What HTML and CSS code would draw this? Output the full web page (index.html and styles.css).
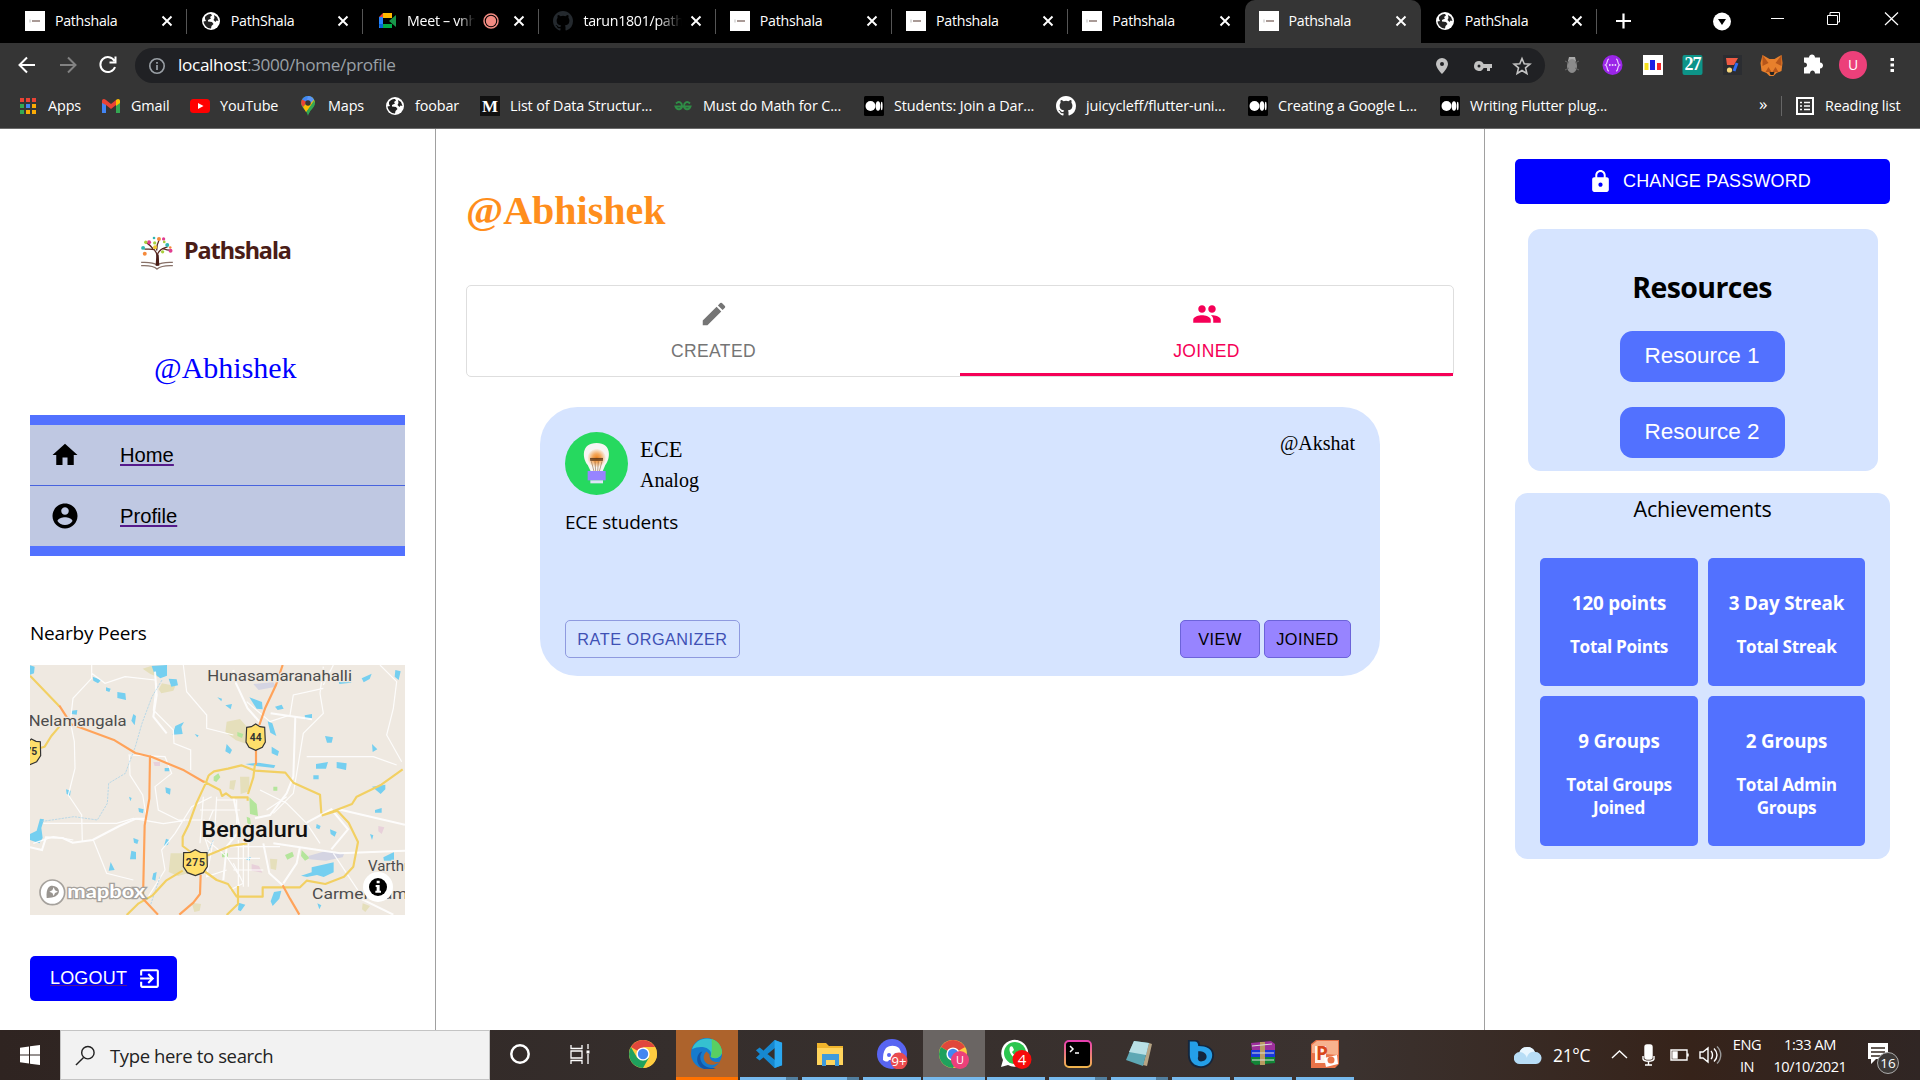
FILE: index.html
```html
<!DOCTYPE html>
<html lang="en">
<head>
<meta charset="utf-8">
<title>Pathshala</title>
<link rel="stylesheet" href="styles.css">
</head>
<body>
<svg class="defs" width="0" height="0" aria-hidden="true">
  <symbol id="globe" viewBox="0 0 20 20"><circle cx="10" cy="10" r="9" fill="#fff"/><path d="M4 6c1-2 4-3.500 6-3l1 1.500-2 1.500 1 1.500-3 1.500v1.500l4 .5 1.500 2-2 2-.5 2.500C6 17.500 3 14 2.500 10.500L5 10 4 8zM13 4l3 2 1.500 4-2-.5-1 1.500-2-2 1-2z" fill="#222"/></symbol>
  <symbol id="close" viewBox="0 0 12 12"><path d="M1.500 1.500l9 9M10.500 1.500l-9 9" stroke="#fff" stroke-width="1.900" fill="none"/></symbol>
  <symbol id="page" viewBox="0 0 20 20"><path fill="#fff" d="M0 0h20v20H0z"/><path d="M7 10h8" stroke="#a99a96" stroke-width="2"/><path d="M5 8.500v3" stroke="#bbb"/></symbol>
  <symbol id="github" viewBox="0 0 16 16"><path d="M8 0C3.580 0 0 3.580 0 8c0 3.540 2.290 6.530 5.470 7.590.4.070.55-.17.55-.38 0-.19-.01-.82-.01-1.490-2.010.37-2.530-.49-2.690-.94-.09-.23-.48-.94-.82-1.130-.28-.15-.68-.52-.01-.53.63-.01 1.080.58 1.230.82.720 1.210 1.870.87 2.330.66.070-.52.280-.87.510-1.070-1.780-.2-3.640-.89-3.640-3.950 0-.87.310-1.590.820-2.150-.08-.2-.36-1.020.080-2.120 0 0 .670-.21 2.200.820a7.600 7.600 0 0 1 4 0c1.530-1.040 2.200-.82 2.200-.82.440 1.100.160 1.920.080 2.120.510.560.820 1.270.820 2.150 0 3.070-1.870 3.750-3.650 3.950.290.250.540.730.540 1.480 0 1.070-.01 1.930-.01 2.200 0 .210.150.460.550.380A8.010 8.010 0 0 0 16 8c0-4.420-3.580-8-8-8z"/></symbol>
  <symbol id="medium" viewBox="0 0 20 20"><rect width="20" height="20" rx="1.500"/><circle cx="6.500" cy="10" r="5" fill="#fff"/><ellipse cx="14" cy="10" rx="2.300" ry="4.700" fill="#fff"/><ellipse cx="17.700" cy="10" rx=".9" ry="4.200" fill="#fff"/></symbol>
  <symbol id="chrome" viewBox="0 0 28 28"><circle cx="14" cy="14" r="14" fill="#ffcd40"/><path d="M14 14 1.900 7A14 14 0 0 1 26.100 7z" fill="#e0473c"/><path d="M14 7h12.100A14 14 0 0 1 14 28l6-10.500z" fill="#ffcd40"/><path d="M1.900 7A14 14 0 0 0 14 28l6-10.500-6 3-6-3z" fill="#1fa15d"/><circle cx="14" cy="14" r="6.600" fill="#fff"/><circle cx="14" cy="14" r="5.200" fill="#4386f0"/></symbol>
</svg>

<header class="browser">
  <div class="tabstrip">
    <div class="tab"><svg class="fav"><use href="#page"/></svg><span>Pathshala</span><svg class="x"><use href="#close"/></svg></div>
    <div class="tab"><svg class="fav"><use href="#globe"/></svg><span>PathShala</span><svg class="x"><use href="#close"/></svg></div>
    <div class="tab"><svg class="fav" viewBox="0 0 20 20"><path d="M2 6v11h4z" fill="#2684fc"/><path d="M2 6l4-4v4z" fill="#ea4335"/><path d="M2 6h4v8H2z" fill="#2684fc"/><path d="M6 2h9v5H6z" fill="#ffba00"/><path d="M2 13h4v4H3z" fill="#0066da"/><path d="M6 13h9v4H6z" fill="#00ac47"/><path d="M12 10l7-6v12z" fill="#19964a"/></svg><span class="fade">Meet – vnh</span><svg class="rec" viewBox="0 0 16 16"><circle cx="8" cy="8" r="7" fill="none" stroke="#f28b82" stroke-width="1.500"/><circle cx="8" cy="8" r="5.200" fill="#f28b82"/></svg><svg class="x"><use href="#close"/></svg></div>
    <div class="tab"><svg class="fav dim"><use href="#github"/></svg><span class="fade">tarun1801/path</span><svg class="x"><use href="#close"/></svg></div>
    <div class="tab"><svg class="fav"><use href="#page"/></svg><span>Pathshala</span><svg class="x"><use href="#close"/></svg></div>
    <div class="tab"><svg class="fav"><use href="#page"/></svg><span>Pathshala</span><svg class="x"><use href="#close"/></svg></div>
    <div class="tab no-sep"><svg class="fav"><use href="#page"/></svg><span>Pathshala</span><svg class="x"><use href="#close"/></svg></div>
    <div class="tab active"><svg class="fav"><use href="#page"/></svg><span>Pathshala</span><svg class="x"><use href="#close"/></svg></div>
    <div class="tab"><svg class="fav"><use href="#globe"/></svg><span>PathShala</span><svg class="x"><use href="#close"/></svg></div>
    <svg class="window-controls" viewBox="0 0 323 43"><path d="M19 21h15M26.500 13.500v15" stroke="#fff" stroke-width="2.200"/><circle cx="125" cy="21.500" r="9" fill="#fff"/><path d="M121 19h8l-4 6z" fill="#000"/><path d="M174 18.500h13" stroke="#fff"/><path d="M230.500 15.500h10v9h-10zM233 15v-2.500h9.500v9.500H241" fill="none" stroke="#fff"/><path d="M288 12.500l13 12.500M301 12.500L288 25" stroke="#fff" stroke-width="1.200"/></svg>
  </div>
  <div class="toolbar">
    <svg class="nav-icons" viewBox="0 0 135 42" fill="none" stroke="#fff" stroke-width="2"><path d="M35 22H20M27 14.500L19.500 22l7.500 7.500"/><path d="M60 22h15M68 14.500l7.500 7.500-7.500 7.500" stroke="#828282"/><path d="M114.500 18a7.500 7.500 0 1 0 .5 6M115.500 13.500v6h-6"/></svg>
    <div class="omnibox">
      <svg class="info" viewBox="0 0 18 18"><circle cx="9" cy="9" r="7.200" fill="none" stroke="#9aa0a6" stroke-width="1.600"/><path d="M9 8v5M9 5v1.700" stroke="#9aa0a6" stroke-width="1.700"/></svg>
      <span class="url">localhost<i>:3000/home/profile</i></span>
      <svg class="omni-icons" viewBox="0 0 120 34"><path d="M17 9a6 6 0 0 0-6 6c0 4 6 10 6 10s6-6 6-10a6 6 0 0 0-6-6zm0 4a2 2 0 1 1 0 4 2 2 0 0 1 0-4z" fill="#c2c2c2"/><path d="M53 12a5 5 0 1 0 4.600 7H61v3h3v-3h2v-4h-8.400A5 5 0 0 0 53 12zm0 3.500a1.500 1.500 0 1 1 0 3 1.500 1.500 0 0 1 0-3z" transform="translate(1 0)" fill="#c2c2c2" fill-rule="evenodd"/><path d="M97 9.500l2.200 5.300 5.700.4-4.400 3.700 1.400 5.600-4.900-3-4.900 3 1.400-5.600-4.400-3.700 5.700-.4z" fill="none" stroke="#c2c2c2" stroke-width="1.600"/></svg>
    </div>
    <svg class="ext" viewBox="0 0 375 43">
      <path d="M24 14h6l1 4h-8z" fill="#aaa"/><ellipse cx="27" cy="23" rx="5" ry="7" fill="#8b8b8b"/><path d="M20 18l4 2M34 18l-4 2M20 27l4-2M34 27l-4-2" stroke="#666"/>
      <circle cx="67.500" cy="22" r="10" fill="#9a25e8"/><path d="M64 16c-2.500 0-1 5-3.500 6 2.500 1 1 6 3.500 6M71 16c2.500 0 1 5 3.500 6-2.500 1-1 6-3.500 6" stroke="#e9c8ff" stroke-width="1.200" fill="none"/><path d="M64 22h7.500" stroke="#fff" stroke-width="1.600" stroke-dasharray="1.600 1.200"/>
      <path d="M98 12h20v20H98z" fill="#fff"/><path d="M101.500 20v7" stroke="#f9e21c" stroke-width="4"/><path d="M107.500 17v10" stroke="#1d22e6" stroke-width="5"/><path d="M114 20v7" stroke="#f2272c" stroke-width="4"/>
      <rect x="137.500" y="12" width="20" height="20" rx="2" fill="#0d9488"/><text x="147.500" y="27" text-anchor="middle" font-size="18" font-weight="700" font-family="Liberation Serif" letter-spacing="-1" fill="#fff">27</text>
      <path d="M178 12h19v20h-19z" fill="#2b2d31"/><path d="M181 15h12l-4 7h-7z" fill="#ef5b43"/><circle cx="184.500" cy="27" r="2.600" fill="#f6d77b"/><path d="M192 20l-3 8" stroke="#2f6cf2" stroke-width="3"/>
      <g transform="translate(9.500 0)"><path d="M208 12l7 4h5l7-4 1 8-1 8-5 2-3 3h-4l-3-3-5-2-1-8z" fill="#e8802c"/><path d="M208 12l6 8-6 3M227 12l-6 8 6 3M211 29l3-5 3 5M224 29l-3-5-3 5" fill="#b7561a"/><path d="M215 29h5l-1 3h-3z" fill="#222"/></g>
      <path d="M259 16h5c0-4 6-4 6 0h5v5c4 0 4 6 0 6v5h-5c0-4-5-4-5 0h-6v-6c4 0 4-5 0-5z" fill="#fff" transform="translate(0 -1.500)"/>
      <circle cx="308" cy="22" r="14" fill="#ec407a"/><text x="308" y="27" text-anchor="middle" font-size="14" font-family="Open Sans" fill="#fff">U</text>
      <path d="M345.500 15h3.500v3h-3.500zM345.500 20.500h3.500v3h-3.500zM345.500 26h3.500v3h-3.500z" fill="#fff"/>
    </svg>
  </div>
  <nav class="bookmarks">
    <a class="b1"><svg viewBox="0 0 20 20"><g fill="#ea4335"><path d="M2 2h4v4H2zM8 2h4v4H8zM14 2h4v4h-4z"/></g><g fill="#34a853"><path d="M2 8h4v4H2zM2 14h4v4H2z"/></g><path d="M8 8h4v4H8z" fill="#4285f4"/><path d="M14 8h4v4h-4zM8 14h4v4H8zM14 14h4v4h-4z" fill="#fbab05"/></svg>Apps</a>
    <a class="b2"><svg viewBox="0 0 20 20"><path d="M1 5v12h4V8z" fill="#4285f4"/><path d="M19 5v12h-4V8z" fill="#34a853"/><path d="M1 5c0-2 2-3 4-1l5 4 5-4v5l-5 4-5-4-4-2z" fill="#ea4335"/><path d="M15 4c2-2 4-1 4 1v2l-4 3z" fill="#fbbc04"/></svg>Gmail</a>
    <a class="b3"><svg viewBox="0 0 20 20"><rect y="3" width="20" height="14" rx="3.500" fill="#f00"/><path d="M8 7l5.500 3L8 13z" fill="#fff"/></svg>YouTube</a>
    <a class="b4"><svg viewBox="0 0 20 20"><path d="M10 0a7 7 0 0 0-7 7c0 5 6 7 7 13 1-6 7-8 7-13a7 7 0 0 0-7-7z" fill="#34a853"/><path d="M10 0a7 7 0 0 0-6 3.500L8 7l6-6z" fill="#4285f4"/><path d="M4 3.500C2 7 4 10 5 11l4-5z" fill="#ea4335"/><path d="M5 11l9-10 3 5-9 10z" fill="#fbbc04"/><path d="M10 0a7 7 0 0 1 6 3.500L12 8 9 4z" fill="#5a95f5"/><path d="M16.300 4C18 9 14 12 12 15l-1.500 3.500L9 15z" fill="#34a853"/><circle cx="10" cy="7" r="2.700" fill="#353535"/></svg>Maps</a>
    <a class="b5"><svg><use href="#globe"/></svg>foobar</a>
    <a class="b6"><svg viewBox="0 0 20 20"><path d="M0 0h20v20H0z" fill="#111"/><text x="10" y="15.500" text-anchor="middle" font-family="Liberation Serif" font-weight="700" font-size="17" fill="#fff">M</text></svg>List of Data Structur...</a>
    <a class="b7"><svg viewBox="0 0 20 20" fill="none" stroke="#2f8d46" stroke-width="1.900"><path d="M3 7.500c3-3 6-1 6 2.500s-5 5-6.500 0.500h15c-1.500 4.500-6.500 3-6.500-.5s3-5.500 6-2.500"/></svg>Must do Math for C...</a>
    <a class="b8"><svg><use href="#medium"/></svg>Students: Join a Dar...</a>
    <a class="b9"><svg fill="#fff"><use href="#github"/></svg>juicycleff/flutter-uni...</a>
    <a class="b10"><svg><use href="#medium"/></svg>Creating a Google L...</a>
    <a class="b11"><svg><use href="#medium"/></svg>Writing Flutter plug...</a>
    <span class="more">»</span>
    <a class="reading"><svg viewBox="0 0 20 20"><path d="M2 2h16v16H2z" fill="none" stroke="#fff" stroke-width="2"/><path d="M5 6.500h2M9 6.500h6M5 10h2M9 10h6M5 13.500h2M9 13.500h6" stroke="#fff" stroke-width="1.500"/></svg>Reading list</a>
  </nav>
</header>

<main class="page">
  <aside class="left">
    <div class="logo">
      <svg viewBox="420 100 108 112"><g fill="none" stroke="#5b2a22" stroke-width="4"><path d="M474 195c4-24 2-35-8-47M476 160c5-12 14-17 30-21M468 148c-12-4-22-2-32-2M473 150c0-14 2-22 7-31M462 145c-6-9-14-15-20-19M490 144c8 2 12 4 21 5"/><path d="M426 186c20-1 38 0 48 8 12-8 28-9 48-8M426 196c20-1 38 0 48 10 12-10 28-11 48-10" stroke="#877067"/></g><path d="M470 196l2-36 7 2 2 34z" fill="#4a1d17"/><g fill="#e13d91"><circle cx="450" cy="125" r="6"/><circle cx="494" cy="115" r="5"/><circle cx="515" cy="151" r="6"/></g><g fill="#31b7b2"><circle cx="432" cy="142" r="6"/><circle cx="505" cy="133" r="6"/><circle cx="465" cy="112" r="4"/></g><g fill="#f58a3c"><circle cx="437" cy="160" r="6"/><circle cx="480" cy="115" r="6"/><circle cx="514" cy="141" r="4"/></g><g fill="#a8cf3d"><circle cx="467" cy="127" r="5"/><circle cx="496" cy="124" r="4"/><circle cx="491" cy="154" r="5"/><circle cx="440" cy="125" r="5"/></g><circle cx="468" cy="140" r="6" fill="#f1c930"/></svg>
      <span>Pathshala</span>
    </div>
    <p class="handle">@Abhishek</p>
    <nav class="menu">
      <a><svg viewBox="0 0 24 24"><path d="M10 20v-6h4v6h5v-8h3L12 3 2 12h3v8z"/></svg><span>Home</span></a>
      <a><svg viewBox="0 0 24 24"><path d="M12 2C6.480 2 2 6.480 2 12s4.480 10 10 10 10-4.480 10-10S17.520 2 12 2zm0 3c1.660 0 3 1.340 3 3s-1.340 3-3 3-3-1.340-3-3 1.340-3 3-3zm0 14.200c-2.500 0-4.710-1.280-6-3.220.030-1.990 4-3.080 6-3.080 1.990 0 5.970 1.090 6 3.080-1.290 1.940-3.500 3.220-6 3.220z"/></svg><span>Profile</span></a>
    </nav>
    <p class="peers">Nearby Peers</p>
    <svg class="map" viewBox="90 165 1125 750" font-family="Roboto, sans-serif">
      <path fill="#efe9e1" d="M90 165h1125v750H90z"/>
      <g fill="#e5dfbb"><path d="M428 176l25-8 30 14-8 20-24-10zM486 220l40 8-6 14-36 8-8-12zM680 335l40-8 18 20v54l-30-10-32-24zM512 730h40l12 60-30 8-28-12zM720 500h28v44l-26 8zM690 512l18-2-6 30-14-4zM810 746l22 2-4 32-16-4zM575 878l28 4-4 20-16 4zM1088 880l22 8-14 18-10-8zM735 380h50v30h-30z"/></g>
      <g fill="#b4e59b"><path d="M748 562l22 20 4 36-24-6zM641 500l14-10 6 12-12 14-8-4zM712 366l18 6-4 12-14-6zM855 735l22-10 5 14-20 10zM905 720l24 24-14 8-12-14zM740 620l10 4 6 34-14-20zM666 730h18v12h-18zM820 530h12v12h-12z"/></g>
      <g fill="#d4d4e2"><path d="M760 222l60-6 8 14-52 10zM925 738l50-14 57 8-4 10-50 10-50-4z"/></g>
      <g fill="#e8d0da"><path d="M755 762l22 6 10 20-32-6zM460 456h20v12h-16zM1135 648l18 4-8 20-10-8z"/></g>
      <g fill="#75cff0"><path d="M455 168l46-3v32l-20 8-18-14zM506 206l24 2 4 18-20 4zM90 166l14 4-2 20-12 4zM278 200l26 10-10 10-14-8zM318 232l14 4-4 10-10-4zM352 246l24 4 2 20-26-6zM214 302l18-2-2 14-16-2zM400 312l8 6-4 28-10-14zM526 348l26-12-8 14 4 22-30 2zM748 262l38 14 2 22-18-2zM825 290l20-6 6 12-18 4zM803 334l14 6 12 38-18-10zM680 402l16 18-6 12-14-8zM815 410l22 14-4 14-18-8zM736 462l40-4 50 8-4 8-70-8zM652 262l14 4-2 8zM676 286l20-4-4 16zM914 316l22-4v14l-20 2zM975 378l24 4-4 16h-14zM1014 206l36-4 4 16-36 4zM1085 205l30-14-6 16-18 10zM1186 180l16 4-6 26-12-10zM948 462l36-6-6 20h-30zM1010 456l30 4-2 20-28-6zM940 496h16v12h-16zM1116 402l16 16-14 8zM1116 530l40-6 0 14-14 14zM1125 600l20-6v14h-20zM198 538l14 4-2 16-10-6zM120 626l12 2-8 26 4 30-10 16-28-10v-18l20-10zM400 684l16 6-4 12-10-4zM394 722l14 4v22h-18zM332 756l12 24-18 2zM460 790l10-4-4 26-10-4zM496 532l16 4-2 18-12-6zM498 686l10 4-4 14-12 4zM415 594l16 4-2 12-12-4zM950 642l12 6-4 10-10-4zM990 658l20 8-6 14-12-8zM935 772l66-15v30l-30 14-20-6-30 6-18-4 32-10zM822 846l22-4-6 24-20 22-6-14zM716 878l20 6-14 20-8-4zM1150 742l32-16v26h-30zM1110 672l10 4-4 14zM952 880l12 6-6 12zM387 560l8 4-4 10zM584 372l12 4-4 6zM735 745l18-4-6 12zM494 474h14v10h-14z"/></g>
      <g fill="none" stroke="#fff" stroke-width="3.500" opacity=".9"><path d="M275 165v40l-56 60-8 70 12 60 2 80-20 80 40 60 2 80M275 190l40 30 60-20 90 10M470 220l-10 80 60 60 2 40 50 20v60M388 435l2 60 38 60 10 60M385 435l110 5 20 50-50 40 10 70 60 30 80 0M130 640l220 0 50-15 90 16 65-10M635 560l-60 30-50 80-40 50 10 60-50 80M820 610l60-60 30-180 60-60-10-60 10-80M1000 165l-30 60M970 235l-90 20-10 60-60 20-70-60M550 165l10 80 60 70 0 40 80 20M1140 165l50 50-10 80-20 80 45 80M920 440h200l70 25M780 540l80 40 60 60 40 60M700 760l30 60-40 20M640 600l-30 70 20 60-50 40M650 560l-5 90 50 40M1000 730l80 120M280 690l40 100 80 20M100 700l60-20 60 10"/><path d="M700 180l8 40 35 75 35 40M812 310l124 18M886 320l-6 180-20 50-50 65-45 10M90 712l36 8 12-38 50 2 30 14 60-8 80-42 50-22h30M500 370l-40-50 10-65-5-70M700 560l20 100-40 50-10 100M920 638l74-40 50 60-50 60M1015 598l200 46M820 700l200 30 195-8M790 700l18 90 40 36M900 710l-10 50-40 60M1070 860l110 54" stroke-width="6"/><path d="M715 690v140M730 690v140M745 700v130M690 710h150M680 745h100M700 780h90M620 690l60 50 40 60M640 690l-20 110 60-20M650 570h60v90M600 600h120M610 560l-10 140M800 600l60-40"/></g>
      <path d="M486 210l-30 50-30 80-20 70-30 80-50 30-4 60-30 50-70-10-100 15M640 690l-30 70M480 800l-30 90" stroke="#9fcfe8" stroke-width="2" stroke-dasharray="7 3" fill="none"/>
      <g fill="none" stroke-linejoin="round"><g stroke="#f2d063" stroke-width="6.500"><path d="M90 197l88 92M178 350l-24 28-20 32-14 4M610 514l50 26 6 18 12-8 16 12h49v10M626 496l16-12 42-8 40-10 42 16 90 6 24 30 80 36 4 56M765 462l-5 40-16 50M626 496l-8 22-28 60-24 66-18 36 0 28 24 18M602 745l60-25 28-12 52-8M548 782l-50 30-40 44-42 24-36 35M608 780l42 30 34 12 26 38h78v-28h112l20-20 56 10 56-22 28-30 14-74-28-58-34-36-44 14 88-34 14-22 74-36 64-46M714 828v54l-34 33"/></g><g stroke="#ffa35a" stroke-width="6.500"><path d="M178 287l36 56 130 48 62 38 50 12 96 40 60 35M450 436l-2 130-14 80-5 220 45 48M602 794l-2 58-20 26-42 36M848 165l-20 60-32 68-18 52M768 418v46M848 826l22 40 28 48"/></g></g>
      <g stroke="#efe9e1" stroke-width="7" paint-order="stroke" fill="#4c4c4c" font-size="46"><text x="622" y="213" textLength="434" lengthAdjust="spacingAndGlyphs">Hunasamaranahalli</text><text x="86" y="349" textLength="294" lengthAdjust="spacingAndGlyphs">Nelamangala</text><text x="1104" y="783" textLength="133" lengthAdjust="spacingAndGlyphs">Varthu</text><text x="936" y="866" textLength="287" lengthAdjust="spacingAndGlyphs">Carmelaram</text><text x="604" y="682" font-size="68" font-weight="500" fill="#111" textLength="320" lengthAdjust="spacingAndGlyphs">Bengaluru</text></g>
      <g fill="#ffdf6b" stroke="#333" stroke-width="3.500"><path d="M740 352l14-2 13-8 13 8 14 2 2 44-9 16-20 9-20-9-9-16z"/><path d="M551 728l20-1 15-8 15 8 20 1 1 42-12 18-24 9-24-9-12-18z"/><path d="M70 395l16-1 8-7 14 7 13 1 1 42-12 18-20 9-20-9z"/></g>
      <g font-weight="700" font-size="31" fill="#333" text-anchor="middle"><text x="767" y="392">44</text><text x="586" y="768" textLength="58">275</text><text x="85" y="434">275</text></g>
      <g><circle cx="157" cy="847" r="37" fill="#fff" stroke="#a6a29d" stroke-width="5"/><path d="M140 864c-3-40 16-38 24-35 20 6 20 36-24 35z" fill="#999590"/><path d="M161 832l4 9 9 4-9 4-4 9-4-9-9-4 9-4z" fill="#fff"/><text x="202" y="865" font-family="Lato" font-size="57" font-weight="700" fill="#fff" stroke="#a6a29d" stroke-width="8" paint-order="stroke" textLength="234" lengthAdjust="spacingAndGlyphs">mapbox</text></g>
      <circle cx="1134" cy="831" r="45" fill="#fff"/><circle cx="1134" cy="831" r="27" fill="#000"/><path d="M1130 812h9v8h-9zM1127 825h12v17h4v6h-17v-6h4v-11h-3z" fill="#fff"/>
    </svg>
    <button class="logout"><span>LOGOUT</span><svg viewBox="0 0 24 24"><path d="M10.090 15.590 11.500 17l5-5-5-5-1.410 1.410L12.670 11H3v2h9.670l-2.580 2.590zM19 3H5c-1.110 0-2 .9-2 2v4h2V5h14v14H5v-4H3v4c0 1.100.890 2 2 2h14c1.100 0 2-.9 2-2V5c0-1.100-.9-2-2-2z"/></svg></button>
  </aside>

  <section class="center">
    <h1>@Abhishek</h1>
    <div class="switch">
      <div class="pane"><svg viewBox="0 0 24 24"><path d="M3 17.250V21h3.750L17.810 9.940l-3.750-3.750L3 17.250zM20.710 7.040c.39-.39.39-1.020 0-1.410l-2.340-2.340a.9959.9959 0 0 0-1.410 0l-1.830 1.830 3.750 3.750 1.830-1.830z"/></svg><span>CREATED</span></div>
      <div class="pane selected"><svg viewBox="0 0 24 24"><path d="M16 11c1.660 0 2.990-1.340 2.990-3S17.660 5 16 5s-3 1.340-3 3 1.340 3 3 3zm-8 0c1.660 0 2.990-1.340 2.990-3S9.660 5 8 5 5 6.340 5 8s1.340 3 3 3zm0 2c-2.330 0-7 1.170-7 3.500V19h14v-2.500c0-2.330-4.670-3.500-7-3.500zm8 0c-.29 0-.62.020-.97.050 1.160.84 1.970 1.970 1.970 3.450V19h6v-2.500c0-2.330-4.670-3.500-7-3.500z"/></svg><span>JOINED</span></div>
    </div>
    <article class="card">
      <div class="card-head">
        <svg viewBox="105 96 189 189"><defs><radialGradient id="glow"><stop offset="0" stop-color="#ec8420"/><stop offset=".45" stop-color="#f4a85d"/><stop offset="1" stop-color="#f7f3ee"/></radialGradient></defs><circle cx="199.500" cy="190.500" r="94.500" fill="#26d95f"/><path d="M200 129c-48 0-43 47-27 66l9 19h36l8-19c16-19 20-66-26-66z" fill="#f7f5f3"/><circle cx="200" cy="174" r="28" fill="url(#glow)"/><path d="M181 175h38M182 181h36M184 184l8 30M216 184l-8 30M195 184l2 30M205 184l-2 30" stroke="#7a4a1d" stroke-width="2.500" opacity=".6"/><path d="M181 178h38" stroke="#4c2b12" stroke-width="8" stroke-dasharray="4 2"/><path d="M173 213h54v28h-54z" fill="#9784ff"/><path d="M181 241h38v9h-38z" fill="#dfe3f7"/></svg>
        <div class="group"><b>ECE</b><span>Analog</span></div>
        <span class="owner">@Akshat</span>
      </div>
      <p>ECE students</p>
      <div class="actions"><button class="rate">RATE ORGANIZER</button><button class="solid view">VIEW</button><button class="solid joined">JOINED</button></div>
    </article>
  </section>

  <aside class="right">
    <button class="password"><svg viewBox="0 0 24 24"><path d="M18 8h-1V6c0-2.760-2.240-5-5-5S7 3.240 7 6v2H6c-1.100 0-2 .9-2 2v10c0 1.100.9 2 2 2h12c1.100 0 2-.9 2-2V10c0-1.100-.9-2-2-2zm-6 9c-1.100 0-2-.9-2-2s.9-2 2-2 2 .9 2 2-.9 2-2 2zm3.100-9H8.900V6c0-1.710 1.390-3.100 3.100-3.100 1.710 0 3.100 1.390 3.100 3.100v2z"/></svg><span>CHANGE PASSWORD</span></button>
    <div class="resources"><h2>Resources</h2><button>Resource 1</button><button>Resource 2</button></div>
    <div class="achievements">
      <h3>Achievements</h3>
      <div class="tiles">
        <div><b>120 points</b><span>Total Points</span></div>
        <div><b>3 Day Streak</b><span>Total Streak</span></div>
        <div><b>9 Groups</b><span>Total Groups Joined</span></div>
        <div><b>2 Groups</b><span>Total Admin Groups</span></div>
      </div>
    </div>
  </aside>
</main>

<footer class="taskbar">
  <div class="start"><svg viewBox="0 0 20 20"><path d="M0 2.800l9-1.300v8H0zM10 1.300L20 0v9.500H10zM0 10.500h9v8l-9-1.300zM10 10.500h10V20l-10-1.300z" fill="#fff"/></svg></div>
  <div class="search"><svg viewBox="0 0 22 22"><circle cx="13.500" cy="8" r="6.500" fill="none" stroke="#222" stroke-width="1.500"/><path d="M9 13l-8 8" stroke="#222" stroke-width="1.500"/></svg>Type here to search</div>
  <div class="apps">
    <div class="app"><svg viewBox="0 0 28 28"><circle cx="14" cy="14" r="8.700" fill="none" stroke="#fff" stroke-width="2.500"/></svg></div>
    <div class="app"><svg viewBox="0 0 28 28" fill="none" stroke="#fff" stroke-width="1.300"><path d="M5 5v3.500h11V5M5 11h11v7H5zM5 24v-3.500h11V24M22 4v5M22 14v10"/><path d="M20.500 10.500h3v3h-3z" fill="#fff" stroke="none"/></svg></div>
    <div class="app"><svg><use href="#chrome"/></svg></div>
    <div class="app edge"><svg viewBox="0 0 30 30"><circle cx="15" cy="15" r="15" fill="#167bcd"/><path d="M1 11C5-3 27-4 30 13c0 7-9 8-11 5 3-8-9-12-18-7z" fill="#35c1d0"/><path d="M20 1c7 2 10 8 10 13-1 5-8 7-11 4 2-6 1-13 1-17z" fill="#59cf62"/><path d="M11 13c-5 7 0 15 8 16h5c-9 5-18-1-18-8 0-5 3-8 5-8z" fill="#1455a5"/><path d="M15 13c-5 4-3 12 4 13 4 0 7-1 9-3-3 1-11 0-10-7z" fill="#ad632c"/></svg></div>
    <div class="app run stack"><svg viewBox="0 0 30 30"><path d="M21 0l8 3v24l-8 3L1 11l4-3 17 14V8L5 22l-4-3z" fill="#1688d0"/><path d="M21 0l8 3v24l-8 3z" fill="#2ba8f0"/></svg></div>
    <div class="app run stack"><svg viewBox="0 0 28 28"><path d="M1 3h9l3 3h14v19H1z" fill="#f0b52c"/><path d="M1 8h26v17H1z" fill="#ffd45c"/><path d="M6 14h17v12h-4v-6h-9v6H6z" fill="#3f9bdc"/></svg></div>
    <div class="app run"><svg class="badged" viewBox="0 0 34 30"><circle cx="17" cy="15" r="15" fill="#5865f2"/><path d="M11 9c4-3 9-3 13 0 3 5 3 9 3 12-3 2-5 2-6 0h-7c-1 2-3 2-6 0 0-4 0-8 3-12z" fill="#fff"/><circle cx="14" cy="16" r="2" fill="#5865f2"/><circle cx="21" cy="16" r="2" fill="#5865f2"/><circle cx="24" cy="22" r="8.500" fill="#ea4b4e"/><text x="24" y="27" text-anchor="middle" font-size="13" font-family="Open Sans" fill="#fff">9+</text></svg></div>
    <div class="app run current"><svg class="badged" viewBox="0 0 34 30"><g transform="translate(2 1)"><circle cx="14" cy="14" r="14" fill="#ffcd40"/><path d="M14 14 1.900 7A14 14 0 0 1 26.100 7z" fill="#e0473c"/><path d="M1.900 7A14 14 0 0 0 14 28l6-10.500z" fill="#1fa15d"/><circle cx="14" cy="14" r="6.600" fill="#fff"/><circle cx="14" cy="14" r="5.200" fill="#4386f0"/></g><circle cx="23" cy="21" r="9" fill="#ec407a"/><text x="23" y="25" text-anchor="middle" font-size="11" font-family="Open Sans" fill="#fff">U</text></svg></div>
    <div class="app run"><svg class="badged" viewBox="0 0 34 30"><path d="M2 28l2-7A13.500 13.500 0 1 1 9 26z" fill="#fff"/><circle cx="16" cy="14" r="11" fill="#2cc64f"/><path d="M11 8c2-2 3 0 4 3l-2 2c2 3 3 4 6 5l2-2c4 1 5 2 3 4-6 4-16-6-13-12z" fill="#fff"/><circle cx="23" cy="20.500" r="9.500" fill="#f60c0c"/><text x="23" y="26" text-anchor="middle" font-size="15" font-family="Open Sans" fill="#fff">4</text></svg></div>
    <div class="app run stack"><svg viewBox="0 0 28 28"><defs><linearGradient id="term" x2="0" y2="1"><stop stop-color="#e83fb0"/><stop offset="1" stop-color="#f0b44c"/></linearGradient></defs><rect x="1" y="1" width="26" height="26" rx="4" fill="#000" stroke="url(#term)" stroke-width="2"/><path d="M6 6l3 3-3 3M11 13h4" stroke="#fff" stroke-width="1.500" fill="none"/></svg></div>
    <div class="app run stack"><svg viewBox="0 0 28 28"><path d="M24 3l3 1-5 22-4-1z" fill="#b7a484"/><path d="M9 1l15 2-6 23L1 20z" fill="#5ea8b5"/><path d="M9 1l15 2-3 12-17-3z" fill="#b9e0e6"/></svg></div>
    <div class="app run"><svg viewBox="0 0 30 30"><path d="M1 0h8c3 0 5 2 5 5 9 0 15 4 15 11s-6 14-14 14S1 25 1 16z" fill="#14263d"/><path d="M3 1.500h5c3 0 4 2 4 5 9 0 15 3 15 9.500S22 28 15 28 3 23 3 16z" fill="#249fe8"/><path d="M12 12c6 0 9 2 9 6 0 3-3 5-6 5s-4-3-3-5z" fill="#14263d"/></svg></div>
    <div class="app run"><svg viewBox="0 0 28 28"><path d="M2 3l20-2 4 3v6H3z" fill="#9d2f9c"/><path d="M2 10h24v7H2z" fill="#1737dc"/><path d="M2 17h24v6l-20 2-4-3z" fill="#128536"/><path d="M11 2h5v23h-5z" fill="#b99b62"/><path d="M3 6l20-2M3 13h22M3 20h22" stroke="#ddd" stroke-width="1"/></svg></div>
    <div class="app run"><svg viewBox="0 0 28 28"><path d="M0 4l5-4h23v24l-4 4H0z" fill="#e97348"/><path d="M1 5l5-4h21v14l-26-2z" fill="#f7b28e"/><path d="M4 6h11v17H4z" fill="#fff3ea"/><text x="5" y="20" font-size="19" font-weight="700" font-family="Open Sans" fill="#d9471c">P</text><path d="M13 18l13-3 1 9-12 3z" fill="#fff"/><circle cx="20" cy="20" r="3.500" fill="#e97348"/></svg></div>
  </div>
  <div class="tray">
    <svg class="cloud" viewBox="0 0 28 20"><path d="M6 19a6 6 0 0 1-.5-12A8.500 8.500 0 0 1 21 7a6 6 0 0 1 1 12z" fill="#b8ddf6"/><path d="M5.500 7A8.500 8.500 0 0 1 21 7c-6-1-8 4-8 6-2-5-5-6-7.500-6z" fill="#e9f6ff"/></svg>
    <span class="temp">21°C</span>
    <svg class="tray-icons" viewBox="0 0 115 24" fill="none" stroke="#fff" stroke-width="1.400"><path d="M1 15l7.500-7 7.500 7"/><rect x="34" y="2" width="7" height="14" rx="2" fill="#fff"/><path d="M32 13v3c1 3 10 3 11 0v-3M37.500 18v4M34 22h7"/><path d="M60 7h16v10H60zM77 10.500v3"/><path d="M62 9h4v6h-4z" fill="#fff"/><path d="M89 9v6h3l5 4V5l-5 4zM100 8c2 2 2 6 0 8M103 5.500c4 4 4 9 0 13" /><path d="M106 3.500c5 5 5 12 0 17" stroke="#999"/></svg>
    <div class="two lang"><span>ENG</span><span>IN</span></div>
    <div class="two clock"><span>1:33 AM</span><span>10/10/2021</span></div>
    <svg class="notes" viewBox="0 0 36 34"><path d="M2 2h20v16H10l-5 5v-5H2z" fill="#fff"/><path d="M5 7h14M5 11h14M5 15h9" stroke="#33271f" stroke-width="1.700"/><circle cx="22" cy="22" r="10.500" fill="#3d3937" stroke="#aaa"/><text x="22" y="27" text-anchor="middle" font-size="13.500" font-family="Open Sans" fill="#fff">16</text></svg>
  </div>
</footer>
</body>
</html>
```
FILE: styles.css
```css
* { box-sizing: border-box; }
body {
  margin: 0;
  width: 1920px;
  height: 1080px;
  overflow: hidden;
  display: flex;
  flex-direction: column;
  background: #fff;
  color: #000;
  font-family: "Open Sans", "Noto Sans", sans-serif;
}
svg { display: block; flex: none; }
p, h1, h2, h3 { margin: 0; font-weight: 400; }
button { border: 0; padding: 0; margin: 0; font-family: "Liberation Sans", Arial, sans-serif; }
.defs { position: absolute; }

/* Browser window */
.browser { height: 129px; background: #353535; color: #fff; border-bottom: 1px solid #6b6b6b; }
.tabstrip { display: flex; height: 43px; background: #000; }
.tab {
  position: relative;
  display: flex;
  align-items: center;
  width: 176.4px;
  height: 43px;
  padding: 0 4px 2px 14px;
  font-size: 14.200px;
  letter-spacing: -.02em;
}
.tab:first-child { width: 187px; padding-left: 25px; padding-right: 14px; }
.tab:first-child .x { margin-right: 0; }
.tab::after { content: ""; position: absolute; right: 0; top: 9px; width: 1px; height: 25px; background: #555; }
.tab.no-sep::after, .tab.active::after { display: none; }
.tab .fav { width: 20px; height: 20px; margin-right: 10px; }
.tab .dim { fill: #24292e; }
.tab span { flex: 1; white-space: nowrap; overflow: hidden; }
.tab .fade { -webkit-mask-image: linear-gradient(90deg, #000 75%, transparent); mask-image: linear-gradient(90deg, #000 75%, transparent); }
.tab .rec { width: 16px; height: 16px; margin: 0 14px 0 8px; }
.tab .x { width: 12px; height: 12px; margin-right: 10px; margin-left: 8px; }
.tab .rec + .x { margin-left: 0; }
.tab.active { background: #353535; border-radius: 10px 10px 0 0; }
.window-controls { width: 323px; height: 43px; }

.toolbar { display: flex; height: 43px; }
.nav-icons { width: 135px; height: 42px; }
.omnibox { display: flex; align-items: center; width: 1410px; height: 35px; margin-top: 5px; border-radius: 18px; background: #202124; }
.omnibox .info { width: 18px; height: 18px; margin: 0 12px 0 13px; }
.url { flex: 1; padding-bottom: 2px; font-size: 17.200px; letter-spacing: -.02em; }
.url i { font-style: normal; color: #9aa0a6; }
.omni-icons { width: 120px; height: 34px; }
.ext { width: 375px; height: 43px; }

.bookmarks { display: flex; align-items: center; height: 40px; padding: 0 0 1px 18px; font-size: 14.400px; letter-spacing: -.009em; }
.bookmarks a { display: flex; align-items: center; gap: 10px; flex: none; white-space: nowrap; }
.bookmarks svg { width: 20px; height: 20px; }
.b1 { width: 83px; }
.b2 { width: 89px; }
.b3 { width: 108px; }
.b4 { width: 87px; }
.b5 { width: 95px; }
.b6 { width: 193px; }
.b7 { width: 191px; }
.b8, .b9, .b10 { width: 192px; }
.b11 { width: 319px; }
.more { width: 22px; height: 24px; line-height: 20px; font-size: 17px; }
.bookmarks .reading { height: 20px; padding-left: 13px; border-left: 1px solid #666; }

/* App */
.page { display: flex; height: 901px; }
.left { width: 436px; padding: 0 30px; border-right: 1px solid #a0a0a0; }
.logo { display: flex; gap: 9px; align-items: center; height: 36px; margin: 105px 0 0 109px; }
.logo svg { width: 36px; height: 37px; }
.logo span { font: 700 23.500px/34px "Noto Sans", sans-serif; letter-spacing: -.045em; color: #4a1d17; padding-bottom: 4px; }
.handle { margin: 80px 0 0 124px; font: 30px/36px "Liberation Serif", serif; color: #00f; }
.menu { margin-top: 29px; border: solid #5271ff; border-width: 10px 0; background: #bfc8e2; }
.menu a { display: flex; align-items: center; gap: 40px; height: 60px; padding-left: 20px; font: 20.200px "Liberation Sans", sans-serif; text-decoration: underline #551a8b 2px; text-underline-offset: 2px; }
.menu a + a { height: 61px; border-top: 1px solid #4763de; }
.menu svg { width: 30px; height: 30px; }
.peers { margin-top: 62px; font-size: 19px; line-height: 30px; letter-spacing: -.01em; }
.map { width: 375px; height: 250px; margin-top: 17px; }
.logout, .password { display: flex; align-items: center; height: 45px; border-radius: 5px; background: #00f; color: #fff; font-size: 18px; }
.logout { width: 147px; margin-top: 41px; padding-left: 20px; }
.logout span { width: 87px; text-align: left; letter-spacing: .01em; text-decoration: underline #551a8b 1px; }
.logout svg { width: 25px; height: 25px; fill: #fff; }

.center { width: 1048px; padding: 0 30px; }
h1 { margin-top: 57px; font: 700 40px/50px "Liberation Serif", serif; color: #ff8e1c; }
.switch { display: flex; height: 92px; margin-top: 49px; border: 1px solid #dedede; border-radius: 5px; }
.pane { flex: 1; display: flex; flex-direction: column; align-items: center; padding-top: 13px; color: #757575; fill: #757575; font: 17.500px/20px "Liberation Sans", sans-serif; letter-spacing: .4px; }
.pane svg { width: 30px; height: 30px; margin-bottom: 12px; }
.selected { color: #f50057; fill: #f50057; border-bottom: 3px solid #f50057; }
.card { width: 840px; height: 269px; margin: 30px 0 0 74px; padding: 25px 25px 0; border-radius: 37.500px; background: #d6e4ff; }
.card-head { display: flex; height: 63px; }
.card-head svg { width: 63px; height: 63px; }
.group { flex: 1; display: flex; flex-direction: column; padding: 4px 0 0 12px; font: 20px/30px "Liberation Serif", serif; }
.group b { font-weight: 400; font-size: 22.500px; line-height: 28px; height: 29px; }
.owner { font: 20px/23px "Liberation Serif", serif; }
.card p { margin-top: 12px; font-size: 19px; line-height: 30px; letter-spacing: -.01em; }
.actions { display: flex; gap: 4px; margin: 83px 4px 0 0; }
.actions button { height: 38px; border-radius: 5px; font-size: 16.250px; letter-spacing: .5px; }
.rate { width: 175px; margin-right: auto; border: 1px solid #8f9adf; background: none; color: #3f51b5; }
.solid { border: 1px solid #6c63d9; background: #9784ff; color: #000; }
.view { width: 80px; }
.joined { width: 87px; }

.right { width: 436px; padding: 30px 30px 0; border-left: 1px solid #a0a0a0; }
.password { width: 375px; justify-content: center; gap: 10px; padding-right: 6px; letter-spacing: .15px; }
.password svg { width: 25px; height: 25px; fill: #fff; }
.resources { display: flex; flex-direction: column; align-items: center; width: 350px; height: 242px; margin: 25px 0 0 13px; padding-right: 2px; border-radius: 12.500px; background: #d6e4ff; }
h2 { margin-top: 37px; font-size: 28.500px; line-height: 42px; font-weight: 700; letter-spacing: -.02em; }
.resources button { width: 165px; height: 51px; padding-bottom: 2px; border-radius: 12.500px; background: #5271ff; color: #fff; font-size: 22.500px; }
.resources h2 + button { margin: 23px 0 25px; }
.achievements { width: 375px; height: 366px; margin-top: 22px; border-radius: 12.500px; background: #d6e4ff; }
h3 { height: 65px; font-size: 21.500px; line-height: 31px; text-align: center; letter-spacing: -.01em; }
.tiles { display: grid; grid-template: 128px 150px / 158px 157px; gap: 10px; padding: 0 25px; color: #fff; font-weight: 700; text-align: center; }
.tiles div { display: flex; flex-direction: column; gap: 19px; padding: 33px 15px 0; border-radius: 5px; background: #5271ff; }
.tiles b { font-size: 18.800px; font-weight: 700; line-height: 25px; margin: 0 -10px; letter-spacing: -.01em; }
.tiles span { font-size: 17.200px; line-height: 23px; letter-spacing: -.02em; }

/* Desktop taskbar */
.taskbar { display: flex; height: 50px; color: #fff; background: linear-gradient(90deg, #2f2421, #352e2c 35%, #3b322f 70%, #36231a 88%, #302624); }
.start { display: flex; align-items: center; justify-content: center; width: 60px; }
.start svg { width: 20px; height: 20px; }
.search { display: flex; align-items: center; gap: 14px; width: 430px; padding-left: 14px; border: 1px solid #c4c4c4; background: #f2f2f2; color: #222; font-size: 18.500px; letter-spacing: -.02em; }
.search svg { width: 21px; height: 21px; }
.apps { display: flex; }
.app { display: flex; align-items: center; justify-content: center; width: 61.800px; height: 50px; border-bottom: 3px solid transparent; background-clip: border-box; }
.app:nth-child(1) { width: 60px; }
.app:nth-child(2) { width: 59px; }
.app:nth-child(3) { width: 67px; }
.app svg { width: 28px; height: 28px; }
.edge { background: #ad632c; border-color: #ff7200; }
.edge svg { width: 31px; height: 31px; }
.app .badged { width: 34px; height: 30px; }
.run { border-image: linear-gradient(90deg, transparent 5px, #76b9ed 5px, #76b9ed 57px, transparent 57px) 3; border-style: solid; border-width: 0 0 3px; }
.stack { border-image-source: linear-gradient(90deg, transparent 5px, #76b9ed 5px, #76b9ed 46px, #527f9f 46px, #527f9f 57px, transparent 57px); }
.current { background: #6a6563; border-image-source: linear-gradient(90deg, #76b9ed, #76b9ed); }
.tray { display: flex; align-items: center; width: 406px; margin-left: auto; }
.cloud { width: 28px; height: 20px; }
.temp { width: 68px; padding-left: 11px; font-size: 17.500px; letter-spacing: -.02em; }
.tray-icons { width: 115px; height: 24px; margin-left: 1px; }
.two { display: flex; flex-direction: column; align-items: center; font-size: 14.600px; line-height: 22px; letter-spacing: -.03em; }
.lang { width: 42px; }
.clock { width: 84px; }
.notes { width: 36px; height: 34px; margin-left: 14px; margin-top: 5px; }
```
